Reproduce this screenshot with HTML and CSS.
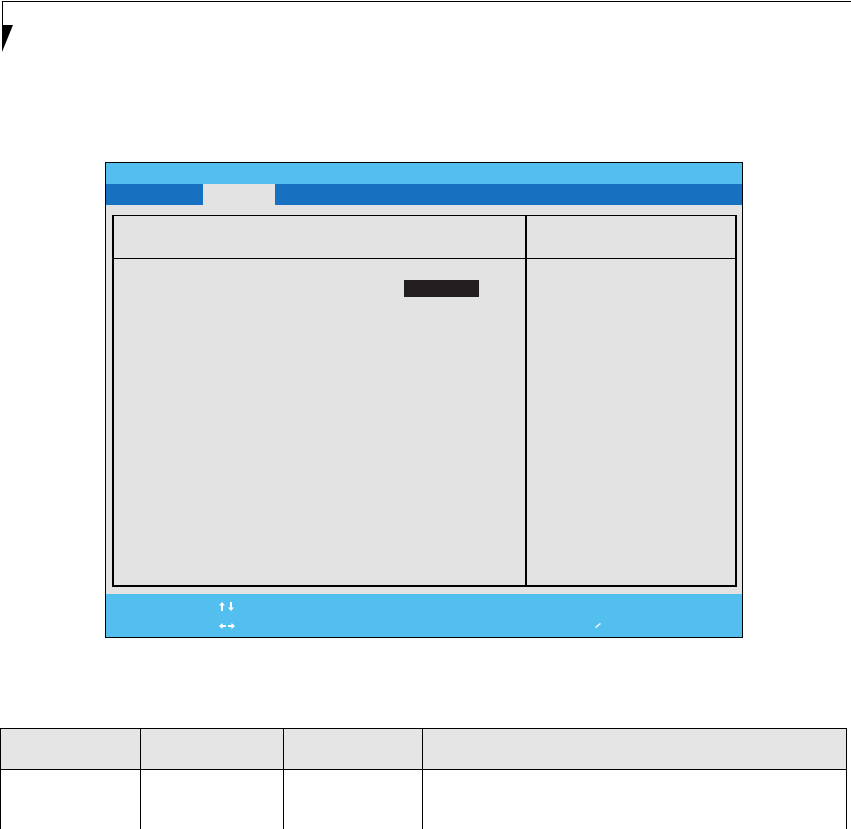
FILE: index.html
```html
<!DOCTYPE html>
<html lang="en">
<head>
<meta charset="utf-8">
<title>BIOS Setup</title>
<link rel="stylesheet" href="styles.css">
</head>
<body>
<div class="page">
  <div class="rule"></div>
  <svg class="marker" width="11" height="27" viewBox="0 0 11 27"><polygon points="0,0 11,0 0,27" fill="#000"/></svg>

  <div class="bios">
    <div class="titlebar"></div>
    <div class="menubar"><div class="tab"></div></div>
    <div class="workarea">
      <div class="box">
        <div class="cell head"></div>
        <div class="cell head side"></div>
        <div class="cell main"><div class="value"></div></div>
        <div class="cell side"></div>
      </div>
    </div>
    <div class="footer">
      <div class="keys">
        <svg class="arrows" width="16" height="9" viewBox="0 0 16 9" aria-label="up down">
          <polygon points="0,3.5 3,0 6,3.5" fill="#fff"/><rect x="2" y="3" width="2" height="6" fill="#fff"/>
          <rect x="11" y="0" width="2" height="6" fill="#fff"/><polygon points="9,5.5 12,9 15,5.5" fill="#fff"/>
        </svg>
      </div>
      <div class="keys">
        <svg class="arrows" width="16" height="6" viewBox="0 0 16 6" aria-label="left right">
          <polygon points="0,3 3.5,0 3.5,6" fill="#fff"/><rect x="3" y="2" width="4" height="2" fill="#fff"/>
          <rect x="9" y="2" width="4" height="2" fill="#fff"/><polygon points="12.5,0 16,3 12.5,6" fill="#fff"/>
        </svg>
        <svg class="tick" width="6" height="5" viewBox="0 0 6 5"><path d="M0.5 4.5 L5.5 0.5" stroke="#fff" stroke-width="1.4"/></svg>
      </div>
    </div>
  </div>

  <table class="grid">
    <tr class="hdr"><td></td><td></td><td></td><td></td></tr>
    <tr class="row"><td></td><td></td><td></td><td></td></tr>
  </table>
</div>
</body>
</html>
```
FILE: styles.css
```css
html, body {
  margin: 0;
  padding: 0;
  background: #fff;
  font-family: "DejaVu Sans", "Liberation Sans", sans-serif;
}
.page {
  width: 851px;
  height: 829px;
  overflow: hidden;
}
.rule {
  margin: 1px 0 0 2px;
  height: 23px;
  border-top: 1px solid #000;
  border-left: 1px solid #000;
}
.marker {
  display: block;
  margin-left: 2px;
}
.bios {
  box-sizing: border-box;
  margin: 110px 0 0 105px;
  width: 638px;
  border: 1px solid #000;
  display: flex;
  flex-direction: column;
}
.titlebar {
  height: 21px;
  background: #53bfee;
}
.menubar {
  height: 21px;
  background: #1870c0;
  display: flex;
}
.tab {
  margin-left: 97px;
  width: 72px;
  background: #e3e3e3;
}
.workarea {
  background: #e3e3e3;
  padding: 10px 5px 7px 6px;
}
.box {
  display: grid;
  grid-template-columns: 411px 210px;
  grid-template-rows: 43px 326px;
  border: 2px solid #000;
  border-top-width: 1px;
}
.cell {
  box-sizing: border-box;
}
.head {
  border-bottom: 1px solid #000;
}
.side {
  border-left: 2px solid #000;
}
.main {
  padding: 21px 0 0 290px;
}
.value {
  width: 75px;
  height: 17px;
  background: #231f20;
}
.footer {
  height: 43px;
  background: #53bfee;
  box-sizing: border-box;
  padding: 3px 0 0 113px;
}
.keys {
  height: 19px;
  display: flex;
  align-items: center;
}
.arrows {
  display: block;
  flex: none;
}
.tick {
  display: block;
  margin-left: 360px;
}
.grid {
  margin-top: 90px;
  border-collapse: collapse;
  width: 847px;
  table-layout: fixed;
}
.grid td {
  border: 1px solid #000;
  padding: 0;
}
.grid td:nth-child(1) { width: 139px; }
.grid td:nth-child(2) { width: 142px; }
.grid td:nth-child(3) { width: 138px; }
.hdr td {
  height: 40px;
  background: #e5e5e5;
}
.row td {
  height: 59px;
}
```
